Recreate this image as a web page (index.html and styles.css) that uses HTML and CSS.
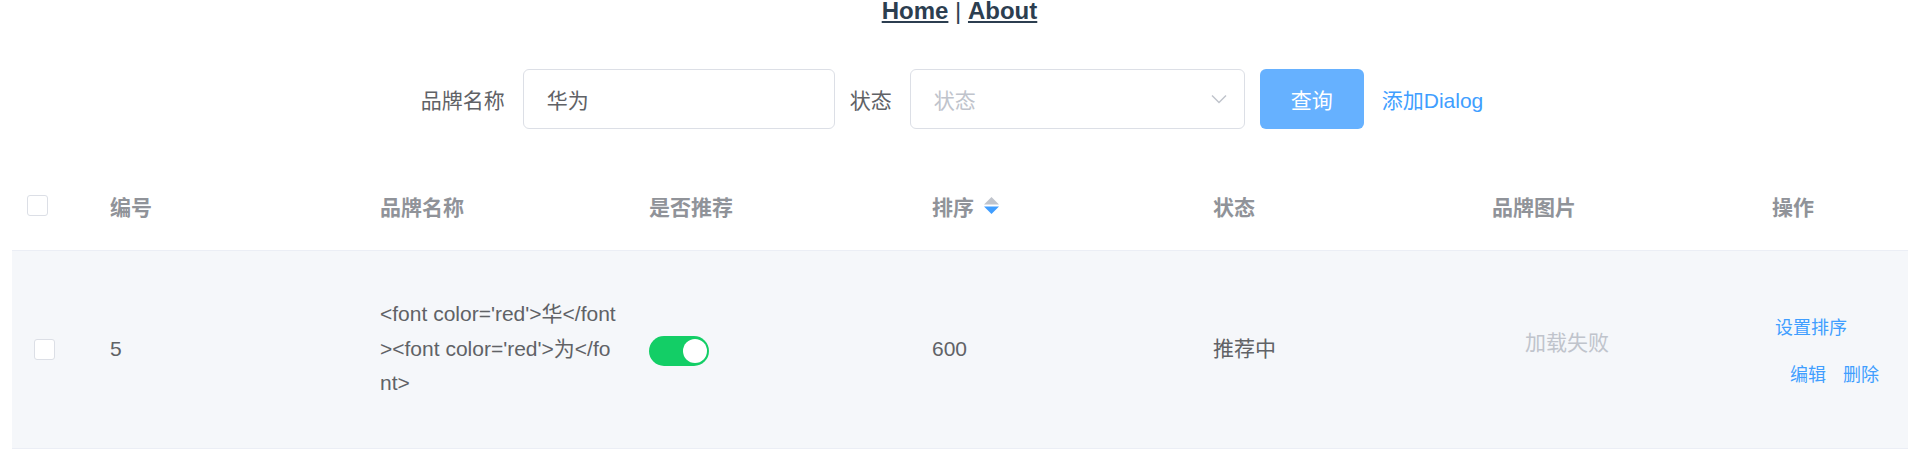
FILE: index.html
```html
<!DOCTYPE html>
<html lang="zh">
<head>
  <meta charset="UTF-8">
  <meta name="viewport" content="width=device-width, initial-scale=1.0">
  <title>品牌管理</title>
  <link rel="stylesheet" href="styles.css">
</head>
<body>
  <div class="nav">
    <a href="#/">Home</a> | <a href="#/about">About</a>
  </div>

  <form class="search-form">
    <div class="form-item">
      <label class="form-label" for="brandName">品牌名称</label>
      <input class="form-input" type="text" id="brandName" value="华为">
    </div>
    <div class="form-item">
      <label class="form-label">状态</label>
      <div class="select">
        <span class="placeholder">状态</span>
        <svg class="select-arrow" width="16" height="10" viewBox="0 0 16 10">
          <polyline points="1,1.5 8,8.5 15,1.5" fill="none" stroke="#c0c4cc" stroke-width="1.5"/>
        </svg>
      </div>
    </div>
    <div class="form-item">
      <button type="button" class="btn-primary">查询</button>
    </div>
    <div class="form-item">
      <button type="button" class="btn-text">添加Dialog</button>
    </div>
  </form>

  <div class="table-wrap">
    <table class="brand-table">
      <colgroup>
        <col style="width: 83px">
        <col style="width: 270px">
        <col style="width: 269px">
        <col style="width: 283px">
        <col style="width: 281px">
        <col style="width: 279px">
        <col style="width: 280px">
        <col>
      </colgroup>
      <thead>
        <tr>
          <th><div class="cell"><span class="checkbox"></span></div></th>
          <th><div class="cell">编号</div></th>
          <th><div class="cell">品牌名称</div></th>
          <th><div class="cell">是否推荐</div></th>
          <th>
            <div class="cell">排序
              <svg class="caret" width="15" height="17" viewBox="0 0 15 17">
                <polygon points="0,7.5 7.5,0 15,7.5" fill="#c0c4cc"/>
                <polygon points="0,9.5 7.5,17 15,9.5" fill="#409eff"/>
              </svg>
            </div>
          </th>
          <th><div class="cell">状态</div></th>
          <th><div class="cell">品牌图片</div></th>
          <th><div class="cell">操作</div></th>
        </tr>
      </thead>
      <tbody>
        <tr>
          <td class="td-check"><span class="checkbox"></span></td>
          <td>5</td>
          <td>&lt;font color='red'&gt;华&lt;/font&gt;&lt;font color='red'&gt;为&lt;/font&gt;</td>
          <td><span class="switch"><span class="knob"></span></span></td>
          <td>600</td>
          <td>推荐中</td>
          <td><div class="img-error">加载失败</div></td>
          <td>
            <div class="ops">
              <div class="ops-row first"><button type="button" class="link-btn">设置排序</button></div>
              <div class="ops-row second">
                <button type="button" class="link-btn">编辑</button>
                <button type="button" class="link-btn">删除</button>
              </div>
            </div>
          </td>
        </tr>
      </tbody>
    </table>
  </div>
</body>
</html>
```

FILE: styles.css
```css
body { margin: 0; font-family: "Liberation Sans", "Noto Sans CJK SC", sans-serif; color: #606266; background: #fff; }

.nav { height: 22px; text-align: center; font-size: 24px; line-height: 22px; color: #2c3e50; }
.nav a { color: #2c3e50; font-weight: bold; }

.search-form { display: flex; justify-content: center; padding-top: 46.5px; }
.form-item { display: flex; align-items: center; margin-right: 15px; margin-bottom: 33px; height: 60px; }
.form-label { font-size: 21px; color: #606266; padding-right: 18px; }
.form-input { width: 312px; height: 60px; box-sizing: border-box; border: 1px solid #dcdfe6; border-radius: 6px; padding: 0 23px; font-family: inherit; font-size: 21px; color: #606266; outline: none; }
.select { width: 335px; height: 60px; box-sizing: border-box; border: 1px solid #dcdfe6; border-radius: 6px; padding: 0 17px 0 23px; display: flex; align-items: center; justify-content: space-between; background: #fff; }
.placeholder { font-size: 21px; color: #c0c4cc; }
.btn-primary { width: 104px; height: 60px; border: 0; border-radius: 6px; background: #66b1ff; color: #fff; font-family: inherit; font-size: 21px; }
.btn-text { height: 60px; border: 0; background: none; padding: 0 0 0 3px; color: #409eff; font-family: inherit; font-size: 21px; }

.table-wrap { padding: 0 11px 0 12px; }
.brand-table { width: 100%; table-layout: fixed; border-collapse: separate; border-spacing: 0; font-size: 21px; }
.brand-table th { padding: 0 15px; border-bottom: 1px solid #ebeef5; text-align: left; color: #909399; font-weight: bold; }
.brand-table th .cell { height: 88px; display: flex; align-items: center; }
.caret { margin-left: 10px; }
.brand-table td { padding: 18px 15px; border-bottom: 1px solid #ebeef5; background: #f5f7fa; vertical-align: middle; line-height: 34.5px; color: #606266; word-break: break-all; }
.brand-table td.td-check { padding-left: 22px; }

.checkbox { display: block; width: 21px; height: 21px; box-sizing: border-box; border: 1px solid #dcdfe6; border-radius: 3px; background: #fff; }

.switch { display: flex; justify-content: flex-end; align-items: center; width: 60px; height: 30px; box-sizing: border-box; padding: 0 2.5px; margin-top: 3px; border-radius: 15px; background: #13ce66; }
.knob { width: 24px; height: 24px; border-radius: 50%; background: #fff; }

.img-error { width: 150px; height: 150px; margin-bottom: 11px; display: flex; align-items: center; justify-content: center; color: #c0c4cc; font-size: 21px; }

.ops { display: flex; flex-direction: column; align-items: flex-start; }
.ops-row { display: flex; align-items: center; height: 47px; }
.ops-row.first { padding-left: 3px; }
.ops-row.second { padding-left: 18px; }
.link-btn { border: 0; background: none; padding: 0; font-family: inherit; font-size: 18px; color: #409eff; cursor: pointer; }
.link-btn + .link-btn { margin-left: 17px; }
```
